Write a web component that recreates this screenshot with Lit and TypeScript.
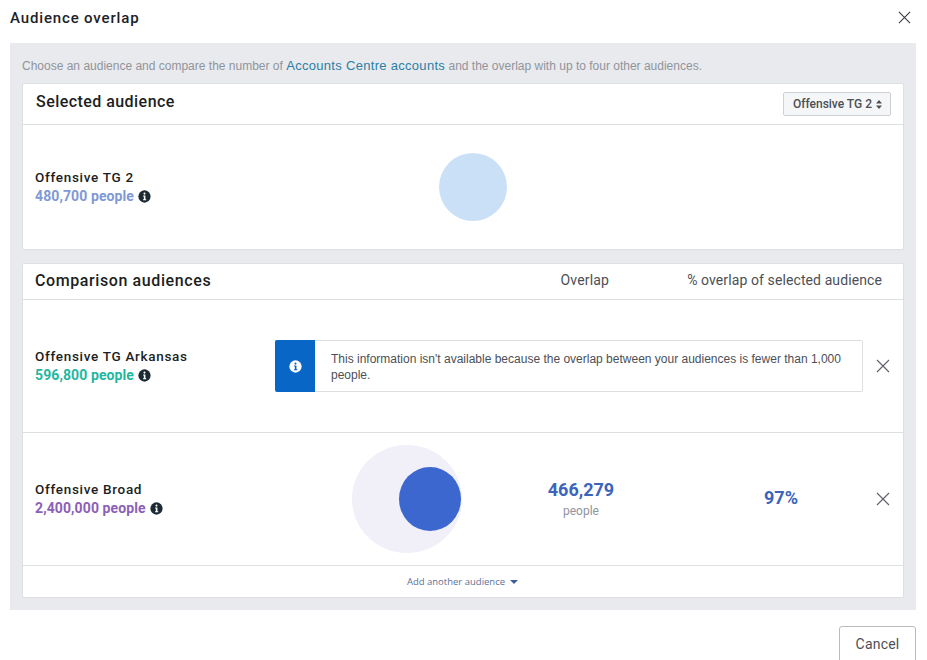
import { LitElement, html, css, svg } from 'lit';
import { customElement } from 'lit/decorators.js';

const closeIcon = (size: number, color: string) => html`
  <svg width=${size} height=${size} viewBox="0 0 14 14" fill="none" stroke=${color} stroke-width="1.1">
    <path d="M1 1 L13 13 M13 1 L1 13"></path>
  </svg>
`;

const infoGlyph = svg`<circle cx="7" cy="7" r="6.6" fill="var(--disc)"></circle>
  <circle cx="7" cy="3.9" r="1.1" fill="var(--mark)"></circle>
  <path d="M5.5 6 H8 V9.9 H8.9 V11 H5.4 V9.9 H6.3 V7.1 H5.5 Z" fill="var(--mark)"></path>`;

const infoIcon = (cls: string) => html`
  <svg class=${cls} width="13" height="13" viewBox="0 0 14 14">${infoGlyph}</svg>
`;

@customElement('app-root')
export class AppRoot extends LitElement {
  static styles = css`
    :host {
      display: block;
      width: 927px;
      height: 660px;
      overflow: hidden;
      background: #fff;
      font-family: "Liberation Sans", Arial, sans-serif;
      color: #1c1e21;
    }
    .top {
      height: 43px;
      display: flex;
      align-items: center;
      justify-content: space-between;
      padding: 0 16px 8px 10px;
      box-sizing: border-box;
    }
    .title {
      font: 500 15px Roboto, sans-serif;
      letter-spacing: 0.85px;
      color: #1d2129;
    }
    .top svg {
      display: block;
      margin-bottom: 1px;
    }
    .panel {
      margin: 0 11px 0 10px;
      height: 567px;
      box-sizing: border-box;
      background: #e9eaed;
      padding: 0 12px 0 12px;
    }
    .intro {
      height: 40px;
      display: flex;
      align-items: center;
      font-size: 12px;
      color: #90949c;
      white-space: pre;
      padding-top: 5px;
      box-sizing: border-box;
    }
    .intro a {
      color: #2a7fa5;
      font-size: 13px;
      letter-spacing: 0.3px;
    }
    .card {
      background: #fff;
      border: 1px solid #dddfe2;
      border-radius: 2px;
      box-sizing: border-box;
    }
    .selected {
      height: 167px;
      margin-bottom: 13px;
    }
    .selected-head {
      height: 41px;
      display: flex;
      align-items: center;
      justify-content: space-between;
      padding: 0 12px 6px 13px;
      box-sizing: border-box;
      border-bottom: 1px solid #dddfe2;
    }
    .card-title {
      font: 500 16px Roboto, sans-serif;
      letter-spacing: 0.45px;
      color: #1c1e21;
    }
    .picker {
      height: 24px;
      padding: 0 8px 0 9px;
      display: flex;
      align-items: center;
      gap: 4px;
      box-sizing: border-box;
      background: #f5f6f7;
      border: 1px solid #ced0d4;
      border-radius: 2px;
      font: 500 12px Roboto, sans-serif;
      color: #4b4f56;
      margin-top: 6px;
    }
    .selected-body {
      height: 124px;
      display: flex;
      align-items: center;
      padding-left: 12px;
    }
    .selected-body .who {
      width: 404px;
    }
    .who .name {
      font: 500 13.5px Roboto, sans-serif;
      letter-spacing: 0.7px;
      color: #1c1e21;
      line-height: 19px;
    }
    .who .count {
      display: flex;
      align-items: center;
      gap: 4px;
      font: 700 14px Roboto, sans-serif;
      letter-spacing: 0.1px;
      line-height: 19px;
    }
    .i-dark {
      --disc: #1c2b33;
      --mark: #fff;
    }
    .i-white {
      --disc: #fff;
      --mark: #0866c6;
    }
    .blue { color: #8098d6; }
    .teal { color: #1fb79f; }
    .purple { color: #8c5fb8; }
    .dot {
      width: 68px;
      height: 68px;
      border-radius: 50%;
      background: #c9e0f7;
      margin-top: -1px;
    }
    .compare {
      height: 335px;
    }
    .compare-head {
      height: 36px;
      display: grid;
      grid-template-columns: 1fr auto 294px;
      align-items: center;
      padding: 0 0 2px 12px;
      box-sizing: border-box;
      border-bottom: 1px solid #dddfe2;
    }
    .compare-head span {
      font: 400 14px Roboto, sans-serif;
      letter-spacing: 0.15px;
      color: #4b4f56;
      margin-bottom: 1px;
    }
    .compare-head .c-pct {
      text-align: right;
      padding-right: 21px;
      letter-spacing: 0.1px;
    }
    .compare-head .card-title {
      letter-spacing: 0.6px;
    }
    .row {
      height: 133px;
      display: grid;
      grid-template-columns: 252px 588px 40px;
      align-items: center;
      box-sizing: border-box;
      border-bottom: 1px solid #dddfe2;
    }
    .row .who {
      padding-left: 12px;
    }
    .x {
      display: flex;
      justify-content: center;
    }
    .notice {
      height: 52px;
      display: flex;
      box-sizing: border-box;
      border: 1px solid #dddfe2;
      border-left: none;
      border-radius: 2px;
      background: #fff;
    }
    .notice .badge {
      width: 40px;
      margin: -1px 0;
      background: #0866c6;
      border-radius: 2px 0 0 2px;
      display: flex;
      align-items: center;
      justify-content: center;
      flex: none;
    }
    .notice p {
      margin: 0;
      padding: 10px 16px 0 16px;
      font-size: 12px;
      line-height: 16px;
      color: #4b4f56;
    }
    .stats {
      display: flex;
      align-items: center;
    }
    .venn-cell {
      width: 240px;
      padding-left: 77px;
      box-sizing: border-box;
    }
    .venn {
      position: relative;
      width: 110px;
      height: 108px;
      border-radius: 50%;
      background: #f1eff8;
    }
    .venn .inner {
      position: absolute;
      left: 47px;
      top: 22px;
      width: 62px;
      height: 64px;
      border-radius: 50%;
      background: #3c67cf;
    }
    .overlap {
      width: 132px;
      padding-bottom: 2px;
      text-align: center;
    }
    .overlap b {
      display: block;
      font: 700 18px Roboto, sans-serif;
      color: #3b64bd;
      line-height: 21px;
      margin-bottom: 4px;
    }
    .overlap span {
      display: block;
      font: 400 12px Roboto, sans-serif;
      color: #90949c;
    }
    .pct {
      width: 164px;
      margin-left: 52px;
      padding-bottom: 4px;
      text-align: center;
      font: 700 18px Roboto, sans-serif;
      color: #3b64bd;
    }
    .foot {
      height: 32px;
      display: flex;
      align-items: center;
      justify-content: center;
      gap: 4px;
      font: 400 9.5px "Open Sans", sans-serif;
      color: #5b7199;
      padding: 0 1px 1px 0;
      box-sizing: border-box;
    }
    .caret {
      width: 0;
      height: 0;
      border-left: 4px solid transparent;
      border-right: 4px solid transparent;
      border-top: 4px solid #3f5f9c;
      margin-left: 1px;
    }
    .actions {
      display: flex;
      justify-content: flex-end;
      padding: 16px 11px 0 0;
    }
    .cancel {
      width: 77px;
      height: 40px;
      padding: 0 0 4px;
      box-sizing: border-box;
      background: #fff;
      border: 1px solid #b8bbc0;
      border-radius: 3px;
      font: 400 14px Roboto, sans-serif;
      letter-spacing: 0.2px;
      color: #4b4f56;
    }
  `;

  render() {
    return html`
      <div class="top">
        <div class="title">Audience overlap</div>
        ${closeIcon(13, '#33363b')}
      </div>
      <div class="panel">
        <div class="intro">Choose an audience and compare the number of <a>Accounts Centre accounts</a> and the overlap with up to four other audiences.</div>
        <section class="card selected">
          <div class="selected-head">
            <div class="card-title">Selected audience</div>
            <div class="picker">
              Offensive TG 2
              <svg width="6" height="9" viewBox="0 0 6 9" fill="#4b4f56">
                <path d="M3 0 L6 3.4 H0 Z M3 9 L0 5.6 H6 Z"></path>
              </svg>
            </div>
          </div>
          <div class="selected-body">
            <div class="who">
              <div class="name">Offensive TG 2</div>
              <div class="count blue">480,700 people ${infoIcon('i-dark')}</div>
            </div>
            <div class="dot"></div>
          </div>
        </section>
        <section class="card compare">
          <div class="compare-head">
            <div class="card-title">Comparison audiences</div>
            <span>Overlap</span>
            <span class="c-pct">% overlap of selected audience</span>
          </div>
          <div class="row">
            <div class="who">
              <div class="name">Offensive TG Arkansas</div>
              <div class="count teal">596,800 people ${infoIcon('i-dark')}</div>
            </div>
            <div class="notice">
              <div class="badge">${infoIcon('i-white')}</div>
              <p>This information isn't available because the overlap between your audiences is fewer than 1,000 people.</p>
            </div>
            <div class="x">${closeIcon(14, '#5d6167')}</div>
          </div>
          <div class="row">
            <div class="who">
              <div class="name">Offensive Broad</div>
              <div class="count purple">2,400,000 people ${infoIcon('i-dark')}</div>
            </div>
            <div class="stats">
              <div class="venn-cell">
                <div class="venn"><div class="inner"></div></div>
              </div>
              <div class="overlap"><b>466,279</b><span>people</span></div>
              <div class="pct">97%</div>
            </div>
            <div class="x">${closeIcon(14, '#5d6167')}</div>
          </div>
          <div class="foot">Add another audience <span class="caret"></span></div>
        </section>
      </div>
      <div class="actions"><button class="cancel">Cancel</button></div>
    `;
  }
}
